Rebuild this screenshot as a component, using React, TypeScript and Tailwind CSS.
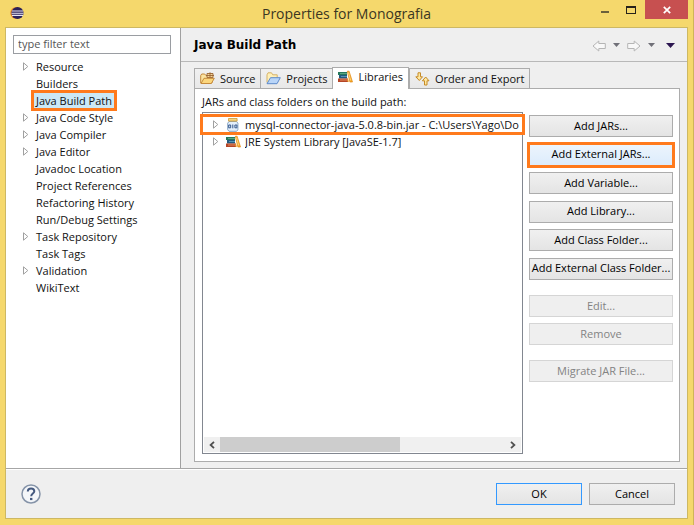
import type { ReactNode } from "react";

const treeItems = [
  { label: "Resource", expandable: true },
  { label: "Builders" },
  { label: "Java Build Path", selected: true },
  { label: "Java Code Style", expandable: true },
  { label: "Java Compiler", expandable: true },
  { label: "Java Editor", expandable: true },
  { label: "Javadoc Location" },
  { label: "Project References" },
  { label: "Refactoring History" },
  { label: "Run/Debug Settings" },
  { label: "Task Repository", expandable: true },
  { label: "Task Tags" },
  { label: "Validation", expandable: true },
  { label: "WikiText" },
];

function Expander() {
  return (
    <svg width="6" height="9" viewBox="0 0 6 9" className="shrink-0" aria-hidden="true">
      <path d="M.5.8v7.4L4.8 4.5z" fill="#fff" stroke="#a0a0a0" />
    </svg>
  );
}

function EclipseLogo() {
  return (
    <svg width="14" height="14" viewBox="0 0 14 14" aria-hidden="true">
      <circle cx="6.2" cy="7" r="6" fill="#f0912c" />
      <circle cx="7.5" cy="7" r="6.1" fill="#2b2159" />
      <path d="M2 5h11M1.5 7.2h12M2 9.4h11" stroke="#e9e6f2" strokeWidth="1.1" />
    </svg>
  );
}

function FolderIcon({ packaged = false }: { packaged?: boolean }) {
  return packaged ? (
    <svg width="15" height="13" viewBox="0 0 15 13" className="shrink-0" aria-hidden="true">
      <path d="M.7 11V3.600l1-1.600h3L6 3.600h6V11z" fill="#fbe3a0" stroke="#c58a3c" />
      <path d="M7 1.500h6v4H7z" fill="#f5d69b" stroke="#9a6432" strokeWidth=".9" />
      <path d="M10 .3v5M6 3.500h8" stroke="#9a6432" strokeWidth=".9" />
      <path d="M1 11.500 4 6.300h10.300l-3 5.200z" fill="#fbd67c" stroke="#c58a3c" />
    </svg>
  ) : (
    <svg width="15" height="13" viewBox="0 0 15 13" className="shrink-0" aria-hidden="true">
      <path d="M1 10.500V2.800l1-2h3.500l1.200 2h4.500v3" fill="#fff0b8" stroke="#d5b36a" />
      <path d="M1 11.700 4.500 5.700h9.800L11 11.700z" fill="#b9d5f8" stroke="#5d8bcb" />
    </svg>
  );
}

function BooksIcon() {
  return (
    <svg width="15" height="13" viewBox="0 0 15 13" className="shrink-0" aria-hidden="true">
      <path d="M0 2h9v3H0z" fill="#26785c" />
      <path d="M2 3h7v1H2z" fill="#5aa583" />
      <path d="M1 5h8v3.500H1z" fill="#225a80" />
      <path d="M3 6h6v1H3z" fill="#5595b5" />
      <path d="M0 8.500h10V12H0z" fill="#b54527" />
      <path d="M2 9.500h8v1H2z" fill="#e08b5d" />
      <path d="M9.300 1.200h1.800L14.500 12h-2.600z" fill="#f5a623" stroke="#e08a1c" strokeWidth=".7" />
      <path d="m9.500 7.500 1.500 4.300H9.500z" fill="#f5a623" />
      <path d="m10.400 2.500 2.300 8" stroke="#ffe390" strokeWidth=".8" />
    </svg>
  );
}

function OrderIcon() {
  return (
    <svg width="15" height="14" viewBox="0 0 15 14" className="shrink-0" aria-hidden="true">
      <path d="M3 .8h2.500v4h2L4.300 8.500.8 4.800H3z" fill="#ffe8a0" stroke="#c58a27" />
      <path d="M9.500 13H12V8.800h2L10.700 5 7.400 8.800h2.100z" fill="#ffe8a0" stroke="#c58a27" />
    </svg>
  );
}

function JarIcon() {
  return (
    <svg width="15" height="14" viewBox="0 0 15 14" className="shrink-0" aria-hidden="true">
      <path d="M3 3.500 1.700 5.200v6.500L3 13.300h7.600l1.300-1.600V5.200L10.600 3.500z" fill="#e4effb" stroke="#88a5c5" />
      <path d="M2.500.5h8.600v2.600H2.500z" fill="#f6d37d" stroke="#c99a3e" strokeWidth=".8" />
      <path d="M2.700 7h2v2.800h-2zM8.900 7h2v2.800h-2zM6.800 6.500v3.800" fill="none" stroke="#34578c" />
    </svg>
  );
}

function Arrow({ forward = false }: { forward?: boolean }) {
  return (
    <svg width="14" height="12" viewBox="0 0 14 12" aria-hidden="true">
      <path
        d={forward ? "M.7 3.500h6.500V1L13 6l-5.800 5V8.500H.7z" : "M13.300 3.500H6.800V1L1 6l5.800 5V8.500h6.500z"}
        fill="#f8f8f8"
        stroke="#b5b5b5"
      />
    </svg>
  );
}

function Caret({ dark = false }: { dark?: boolean }) {
  return (
    <svg width="9" height="5" viewBox="0 0 9 5" aria-hidden="true">
      <path d={dark ? "M0 0h9L4.500 5z" : "M1 0h7L4.500 4z"} fill={dark ? "#2c1650" : "#707078"} />
    </svg>
  );
}

function Chevron({ right = false }: { right?: boolean }) {
  return (
    <svg width="6" height="8" viewBox="0 0 6 8" aria-hidden="true">
      <path d={right ? "m1 .8 3.400 3.200L1 7.200" : "M5 .8 1.600 4 5 7.200"} fill="none" stroke="#505050" strokeWidth="1.800" />
    </svg>
  );
}

function HelpIcon() {
  return (
    <svg width="20" height="20" viewBox="0 0 20 20" aria-hidden="true">
      <circle cx="10" cy="10" r="9" fill="#f4f6f9" stroke="#8593a8" strokeWidth="1.500" />
      <path d="M6.800 7.500c0-2 1.400-3.100 3.300-3.100s3.200 1.100 3.200 2.800c0 2.300-3.100 2.400-3.100 5" fill="none" stroke="#44597f" strokeWidth="2" />
      <path d="M9 13.900h2.400v2.200H9z" fill="#44597f" />
    </svg>
  );
}

function PushButton({ children, look = "normal" }: { children: ReactNode; look?: "normal" | "hot" | "default" }) {
  const looks = {
    normal: "border-[#acacac] bg-linear-to-b from-[#f0f0f0] to-[#e4e4e4]",
    hot: "border-[#ff7a1c] bg-linear-to-b from-[#ecf4fc] to-[#dcecfc] outline-2 outline-[#ff7a1c]",
    default: "border-[#3399ff] bg-linear-to-b from-[#f0f0f0] to-[#e4e4e4]",
  };
  return (
    <button
      type="button"
      className={`flex h-[22px] w-full items-center justify-center border pb-0.5 whitespace-nowrap text-black ${looks[look]}`}
    >
      {children}
    </button>
  );
}

function DisabledButton({ children }: { children: ReactNode }) {
  return (
    <button
      type="button"
      disabled
      className="flex h-[22px] w-full items-center justify-center border border-[#d5d5d5] bg-[#efefef] pb-0.5 whitespace-nowrap text-[#838383]"
    >
      {children}
    </button>
  );
}

function Tab({ icon, label, active = false }: { icon: ReactNode; label: string; active?: boolean }) {
  return (
    <button
      type="button"
      role="tab"
      aria-selected={active}
      className={`flex items-center gap-[5px] border border-b-0 border-[#acacac] px-[5px] whitespace-nowrap ${
        active ? "relative -mb-px h-[22px] bg-white pb-1" : "-mr-px h-5 bg-linear-to-b from-[#f0f0f0] to-[#e8e8e8]"
      }`}
    >
      {icon}
      {label}
    </button>
  );
}

function JarRow({ icon, label, marked = false }: { icon: ReactNode; label: string; marked?: boolean }) {
  return (
    <li
      role="treeitem"
      className={`relative flex h-[17px] items-center gap-[7px] whitespace-nowrap ${
        marked ? "-mx-0.5 pl-[11px] outline-3 -outline-offset-1 outline-[#ff7a1c]" : "pl-[9px]"
      }`}
    >
      <Expander />
      <span className="flex min-w-0 items-center gap-1">
        {icon}
        <span className="overflow-hidden">{label}</span>
      </span>
    </li>
  );
}

export default function App() {
  return (
    <div className="flex h-screen min-h-[480px] w-full flex-col border-r border-[#cfb458] bg-[#f5d86c] pr-[5px] pb-1.5 pl-[5px] font-['Open_Sans','Noto_Sans',sans-serif] text-[11px] leading-[17px] text-[#111]">
      <header className="relative flex h-[27px] shrink-0 items-start justify-between pl-[5px]">
        <div className="pt-1.5"><EclipseLogo /></div>
        <h1 className="absolute inset-x-0 top-0 text-center text-[14px] leading-[27px] text-[#3b3622]">Properties for Monografia</h1>
        <div className="relative flex h-[19px]">
          <button type="button" aria-label="Minimize" className="flex w-6 items-center justify-center pt-1">
            <span className="h-0.5 w-2 bg-[#6b603b]" />
          </button>
          <button type="button" aria-label="Maximize" className="flex w-[28px] items-center justify-center">
            <span className="h-2 w-[10px] border border-t-2 border-[#26221a]" />
          </button>
          <button type="button" aria-label="Close" className="flex w-[43px] items-center justify-center bg-[#c75050]">
            <svg width="8" height="8" viewBox="0 0 8 8" aria-hidden="true">
              <path d="m.8.8 6.400 6.400m0-6.400L.8 7.200" stroke="#fff" strokeWidth="1.700" />
            </svg>
          </button>
        </div>
      </header>

      <div className="flex min-h-0 flex-1 flex-col border border-[#cdb863] bg-[#efefef]">
        <div className="flex min-h-0 flex-1 border-b border-[#a6a6a6]">
          <aside className="w-[175px] shrink-0 border-r border-[#a0a0a0] bg-white">
            <div className="px-[7px] pt-[7px]">
              <input
                type="text"
                aria-label="Filter"
                placeholder="type filter text"
                className="block h-[19px] w-[158px] border border-[#9a9da2] px-1 pb-0.5 placeholder:text-[#555]"
              />
            </div>
            <ul role="tree" className="pt-1 pl-[17px]">
              {treeItems.map((item) => (
                <li key={item.label} role="treeitem" aria-selected={!!item.selected} className="flex h-[17px] items-center gap-1">
                  <span className="flex w-1.5">{item.expandable && <Expander />}</span>
                  <button
                    type="button"
                    className={`px-[3px] whitespace-nowrap ${item.selected ? "relative bg-[#cbe8f6] outline-3 -outline-offset-1 outline-[#ff7a1c]" : ""}`}
                  >
                    {item.label}
                  </button>
                </li>
              ))}
            </ul>
          </aside>

          <main className="flex min-w-0 flex-1 flex-col">
            <div className="flex h-[34px] shrink-0 items-center justify-between border-b border-[#b8b8b8] pt-0.5 pr-3 pl-[13px]">
              <h2 className="font-['DejaVu_Sans',sans-serif] text-[12px] font-bold text-black">Java Build Path</h2>
              <div className="flex items-center gap-1.5">
                <button type="button" aria-label="Back"><Arrow /></button>
                <button type="button" aria-label="Back history"><Caret /></button>
                <button type="button" aria-label="Forward"><Arrow forward /></button>
                <button type="button" aria-label="Forward history"><Caret /></button>
                <button type="button" aria-label="Menu" className="pl-1"><Caret dark /></button>
              </div>
            </div>

            <div className="flex min-h-0 flex-1 flex-col pt-[5px] pr-[7px] pb-1.5 pl-[13px]">
              <div role="tablist" className="flex h-[21px] shrink-0 items-end">
                <Tab icon={<FolderIcon packaged />} label="Source" />
                <Tab icon={<FolderIcon />} label="Projects" />
                <Tab icon={<BooksIcon />} label="Libraries" active />
                <Tab icon={<OrderIcon />} label="Order and Export" />
              </div>
              <div className="flex min-h-0 flex-1 flex-col border border-[#acacac] bg-white pt-1 pr-1.5 pb-[7px] pl-[7px]">
                <p className="h-[19px] shrink-0">JARs and class folders on the build path:</p>
                <div className="flex min-h-0 flex-1 gap-1.5">
                  <div className="flex min-w-0 flex-1 flex-col border border-[#828790] p-px">
                    <ul role="tree" className="min-h-0 flex-1 pt-0.5">
                      <JarRow icon={<JarIcon />} label="mysql-connector-java-5.0.8-bin.jar - C:\Users\Yago\Do" marked />
                      <JarRow icon={<BooksIcon />} label="JRE System Library [JavaSE-1.7]" />
                    </ul>
                    <div className="flex h-[15px] shrink-0 items-stretch bg-[#f0f0f0]">
                      <button type="button" aria-label="Scroll left" className="flex w-4 items-center justify-center"><Chevron /></button>
                      <div className="flex-1"><div className="h-full w-[63%] bg-[#cdcdcd]" /></div>
                      <button type="button" aria-label="Scroll right" className="flex w-4 items-center justify-center"><Chevron right /></button>
                    </div>
                  </div>
                  <div className="flex w-36 shrink-0 flex-col gap-[15px] pt-[3px]">
                    <div className="flex h-[165px] flex-col justify-between">
                      <PushButton>Add JARs...</PushButton>
                      <PushButton look="hot">Add External JARs...</PushButton>
                      <PushButton>Add Variable...</PushButton>
                      <PushButton>Add Library...</PushButton>
                      <PushButton>Add Class Folder...</PushButton>
                      <PushButton>Add External Class Folder...</PushButton>
                    </div>
                    <div className="flex flex-col gap-1.5">
                      <DisabledButton>Edit...</DisabledButton>
                      <DisabledButton>Remove</DisabledButton>
                    </div>
                    <DisabledButton>Migrate JAR File...</DisabledButton>
                  </div>
                </div>
              </div>
            </div>
          </main>
        </div>
        <footer className="flex h-[49px] shrink-0 items-center justify-between border-t border-white pr-3 pl-[15px]">
          <button type="button" aria-label="Help"><HelpIcon /></button>
          <div className="flex gap-[7px]">
            <div className="w-[86px]"><PushButton look="default">OK</PushButton></div>
            <div className="w-[86px]"><PushButton>Cancel</PushButton></div>
          </div>
        </footer>
      </div>
    </div>
  );
}
